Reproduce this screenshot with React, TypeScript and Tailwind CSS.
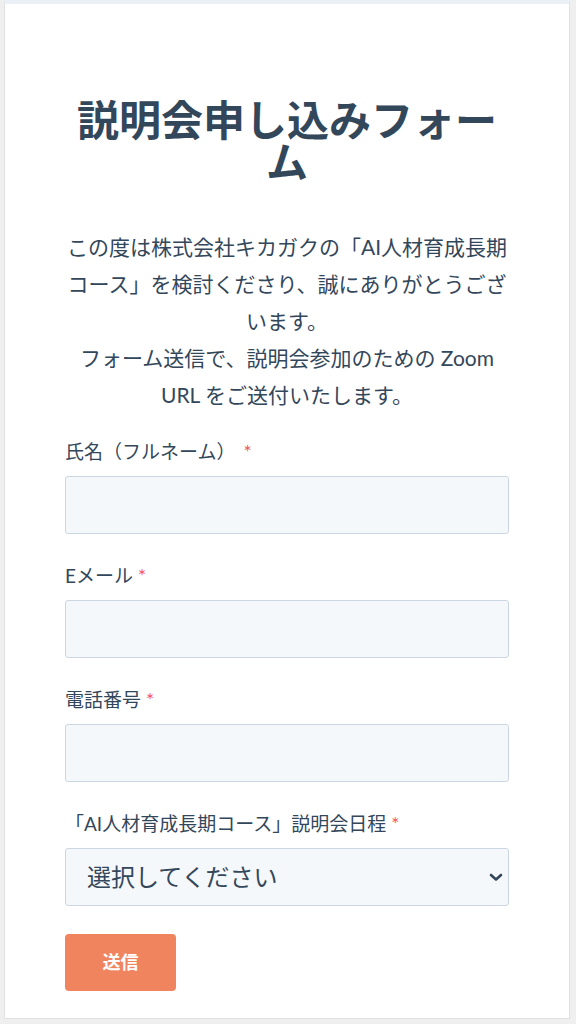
import { ChangeEvent, useState } from 'react';

const fields = [
  { id: 'name', label: '氏名（フルネーム）', type: 'text', gap: true },
  { id: 'email', label: 'Eメール', type: 'email', gap: false },
  { id: 'phone', label: '電話番号', type: 'tel', gap: false },
];

function Required({ gap }: { gap?: boolean }) {
  return <span className={`text-[#f2545b] ${gap ? 'ml-[8px]' : 'ml-[5px]'}`}>*</span>;
}

export default function App() {
  const [values, setValues] = useState<Record<string, string>>({});

  const onChange = (id: string) => (e: ChangeEvent<HTMLInputElement | HTMLSelectElement>) =>
    setValues({ ...values, [id]: e.target.value });

  return (
    <div className="min-h-screen bg-[#efefef] pl-[4px] pr-[6px] pb-[6px] font-['Lato','Noto_Sans_CJK_JP',sans-serif] text-[#33475b]">
      <div className="bg-white border border-[#e1e1e1] border-t-4 border-t-[#eaf0f6] px-[60px] pt-[95px] pb-[27px]">
        <h1 className="text-center text-[42px] leading-[42px] font-bold">説明会申し込みフォーム</h1>

        <p className="mt-[45px] text-center text-[21px] leading-[37px]">
          この度は株式会社キカガクの「AI人材育成長期コース」を検討くださり、誠にありがとうございます。
          <br />
          フォーム送信で、説明会参加のための Zoom URL をご送付いたします。
        </p>

        <form className="mt-[27px]" onSubmit={(e) => e.preventDefault()}>
          {fields.map((f) => (
            <div key={f.id} className="mb-[30px]">
              <label htmlFor={f.id} className="block text-[19px] leading-[24px] mb-[12px]">
                {f.label}
                <Required gap={f.gap} />
              </label>
              <input
                id={f.id}
                type={f.type}
                value={values[f.id] ?? ''}
                onChange={onChange(f.id)}
                className="block w-full h-[58px] rounded-[3px] border border-[#cbd6e2] bg-[#f5f8fa] px-[15px] text-[19px] outline-none"
              />
            </div>
          ))}

          <div className="mb-[28px]">
            <label htmlFor="schedule" className="block text-[19px] leading-[24px] mb-[12px]">
              「AI人材育成長期コース」説明会日程
              <Required />
            </label>
            <div className="relative">
              <select
                id="schedule"
                value={values.schedule ?? ''}
                onChange={onChange('schedule')}
                className="block w-full h-[58px] appearance-none rounded-[3px] border border-[#cbd6e2] bg-[#f5f8fa] pl-[21px] pr-[40px] text-[24px] text-[#33475b] outline-none"
              >
                <option value="">選択してください</option>
              </select>
              <svg
                className="pointer-events-none absolute right-[6px] top-1/2 -translate-y-1/2"
                width="14"
                height="10"
                viewBox="0 0 14 10"
                fill="none"
              >
                <path d="M2 3l5 4.5L12 3" stroke="#33475b" strokeWidth="2.6" strokeLinecap="round" strokeLinejoin="round" />
              </svg>
            </div>
          </div>

          <button
            type="submit"
            className="w-[111px] h-[57px] rounded-[4px] bg-[#f0845f] text-white text-[18px] font-bold"
          >
            送信
          </button>
        </form>
      </div>
    </div>
  );
}
